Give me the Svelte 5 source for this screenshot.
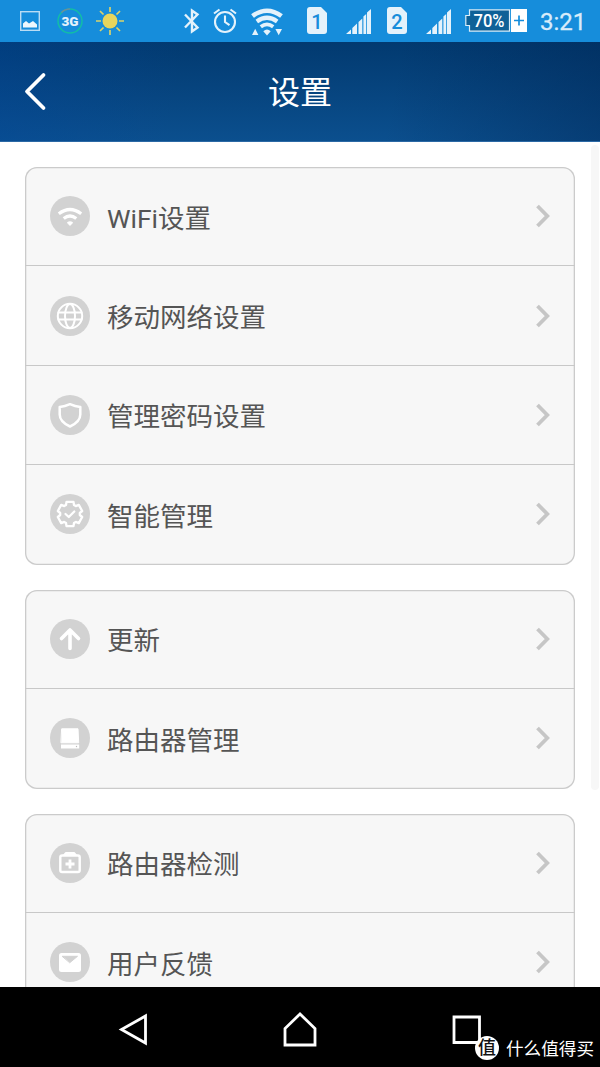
<script>
const groups = [
  [
    { icon: 'wifi', label: 'WiFi设置' },
    { icon: 'globe', label: '移动网络设置' },
    { icon: 'shield', label: '管理密码设置' },
    { icon: 'gear', label: '智能管理' }
  ],
  [
    { icon: 'update', label: '更新' },
    { icon: 'router', label: '路由器管理' }
  ],
  [
    { icon: 'check', label: '路由器检测' },
    { icon: 'mail', label: '用户反馈' }
  ]
]
</script>

{#snippet sim(n)}
  <svg class="sim" width="20" height="42" viewBox="0 0 20 42">
    <path d="M3 7h11l6 6v18a3 3 0 0 1-3 3H3a3 3 0 0 1-3-3V10a3 3 0 0 1 3-3z" fill="#e4f2fb" />
    <text x="10" y="28.5" text-anchor="middle" font-size="20" font-weight="500" fill="#168ddb">{n}</text>
  </svg>
{/snippet}

{#snippet signal()}
  <svg class="signal" width="25" height="42" viewBox="0 0 25 42" fill="#e4f2fb">
    <path d="M0 34L5 29.5V34zM6.3 34V28L11 23.5V34zM12.5 34V22L16.3 18.5V34zM17.4 34V16.5L20.2 14V34zM21 34V12.5L25 9V34z" />
  </svg>
{/snippet}

<div class="screen">
  <div class="status">
    <svg class="picture" width="20" height="42" viewBox="0 0 20 42">
      <rect x=".7" y="11.7" width="18.6" height="18.6" fill="none" stroke="#b9dcf4" stroke-width="1.4" />
      <path d="M3 27.5V23.5l3-2.5 3 2.5 4-2.500 4 3.500v3z" fill="#eef7fd" />
    </svg>
    <svg class="net" width="26" height="42" viewBox="0 0 26 42">
      <circle cx="13" cy="21" r="12" fill="none" stroke="#12bda7" stroke-width="1.5" />
      <path d="M4.5 12.5A12 12 0 0 1 13 9" fill="none" stroke="#6b8d9c" stroke-width="1.6" />
      <text x="13" y="25.7" text-anchor="middle" font-size="12" font-weight="900" textLength="17" lengthAdjust="spacingAndGlyphs" fill="#e4f2fb">3G</text>
    </svg>
    <svg class="sun" width="28" height="42" viewBox="0 0 28 42">
      <circle cx="14" cy="21" r="7.5" fill="#e7d55c" />
      <path d="M14 7v5M14 30v5M0 21h5M23 21h5M4 11l3.5 3.5M20.5 27.5L24 31M4 31l3.5-3.5M20.5 14.5L24 11" stroke="#d9d36c" stroke-width="1.7" />
    </svg>
    <svg class="bluetooth" width="16" height="42" viewBox="0 0 16 42">
      <path d="M1 14.5l12.5 13-5.500 4v-21l5.500 4L1 27.500" fill="none" stroke="#e4f2fb" stroke-width="2.4" />
    </svg>
    <svg class="alarm" width="24" height="42" viewBox="0 0 24 42" fill="none" stroke="#e4f2fb" stroke-width="2.1">
      <circle cx="12" cy="22" r="10" />
      <path d="M12 15.5V22l4.5 3.2M1 13.5l5.5-4M23 13.5l-5.5-4" />
    </svg>
    <svg class="wifi" width="32" height="42" viewBox="0 0 32 42">
      <g fill="none" stroke="#e4f2fb">
        <path d="M1.5 16Q16 5.5 30.5 16" stroke-width="4.6" />
        <path d="M5.8 21.5Q16 14 26.2 21.5" stroke-width="4.2" />
        <path d="M9.8 26.7Q16 22 22.2 26.7" stroke-width="3.8" />
      </g>
      <path d="M12.3 31.2q3.7-3.200 7.400 0L16 35.500zM1 35l3.200-6.300L7.400 35zM24.400 29h6.600l-3.300 6.300z" fill="#e4f2fb" />
    </svg>
    {@render sim(1)}
    {@render signal()}
    {@render sim(2)}
    {@render signal()}
    <svg class="battery" width="62" height="42" viewBox="0 0 62 42">
      <path d="M4.5 9.8h40v21.4h-40v-5.700H.8v-10h3.700z" fill="#0f6197" stroke="#d9edf9" stroke-width="1.2" />
      <rect x="46" y="9" width="16" height="23" fill="#fff" />
      <path d="M54 15.5v10M49 20.5h10" stroke="#168ddb" stroke-width="1.7" />
      <text x="24" y="26.8" text-anchor="middle" font-size="17.5" font-weight="500" textLength="31" lengthAdjust="spacingAndGlyphs" fill="#fff">70%</text>
    </svg>
    <span class="time">3:21</span>
  </div>

  <header>
    <svg class="back" width="24" height="40" viewBox="0 0 24 40">
      <path d="M19.5 4L3 20.500 19.5 37" fill="none" stroke="#fff" stroke-width="3.8" stroke-linecap="round" stroke-linejoin="round" />
    </svg>
    <h1>设置</h1>
  </header>

  <main>
    {#each groups as rows}
      <section>
        {#each rows as row}
          <div class="row">
            <svg class="icon" width="40" height="40" viewBox="0 0 40 40" fill="none" stroke="#fff" stroke-linecap="round" stroke-linejoin="round">
              <circle cx="20" cy="20" r="20" fill="#d2d2d2" stroke="none" />
              {#if row.icon === 'wifi'}
                <path d="M8.8 17.7q11.200-8.500 22.400 0M13.700 22.500q6.300-5 12.600 0" stroke-width="3.3" stroke-linecap="butt" />
                <path d="M17.800 26.700q2.200-1.500 4.400 0L20 29z" fill="#fff" stroke-width="1.4" />
              {:else if row.icon === 'globe'}
                <circle cx="20" cy="20" r="12.2" stroke-width="2" />
                <ellipse cx="20" cy="20" rx="5" ry="12" stroke-width="2" />
                <path d="M8.500 16.500h23M8.500 23.500h23" stroke-width="2" />
              {:else if row.icon === 'shield'}
                <path d="M20 9.200q5 2.300 10.300 2.800v7.500q0 7.300-10.300 12Q9.700 26.800 9.700 19.500V12Q15 11.500 20 9.200z" stroke-width="2.5" />
              {:else if row.icon === 'gear'}
                <path d="M16.500 7.900h7l.5 3.100 1.800 1.100 3-1.200 3.400 6.100-2.400 2v2l2.400 2-3.400 6.100-3-1.200L24 29l-.5 3.100h-7L16 29l-1.800-1.100-3 1.200L7.800 23l2.400-2v-2l-2.400-2 3.400-6.100 3 1.200L16 11z" stroke-width="2.3" />
                <path d="M15.500 20l3.300 3 5.500-5.500" stroke-width="2.3" />
              {:else if row.icon === 'update'}
                <path d="M20 29.500V11.500M11.500 19.500L20 11l8.500 8.500" stroke-width="3.6" />
              {:else if row.icon === 'router'}
                <path d="M12 10.800h16l.7 14H11.300z" fill="#fff" stroke-width="1" />
                <path d="M11 26.500h18.200v4H11z" fill="#fff" stroke="none" />
                <circle cx="26.500" cy="28.500" r=".7" fill="#bbb" stroke="none" />
              {:else if row.icon === 'check'}
                <path d="M14 12l1.700-2h8.600l1.700 2z" fill="#fff" stroke-width="1.8" />
                <rect x="10.300" y="12.500" width="19.400" height="16.500" rx="1.800" stroke-width="2.400" />
                <path d="M20 16.500v9M15.500 21h9" stroke-width="2.800" stroke-linecap="butt" />
              {:else if row.icon === 'mail'}
                <rect x="9" y="11" width="22" height="19" rx="2.5" fill="#fff" stroke="none" />
                <path d="M12.500 14.300h15L20 20.500z" fill="#d2d2d2" stroke="#d2d2d2" stroke-width="1" />
              {/if}
            </svg>
            <span class="label">{row.label}</span>
            <svg class="arrow" width="16" height="26" viewBox="0 0 16 26">
              <path d="M2.500 3l9.800 10-9.800 10" fill="none" stroke="#c6c6c6" stroke-width="3.8" />
            </svg>
          </div>
        {/each}
      </section>
    {/each}
    <i class="scrollbar"></i>
  </main>

  <nav>
    <svg width="32" height="34" viewBox="0 0 32 34"><path d="M29.500 3v27l-24-13.500z" /></svg>
    <svg width="36" height="36" viewBox="0 0 36 36"><path d="M18 2L3 16.500V33h30V16.500z" /></svg>
    <svg width="32" height="32" viewBox="0 0 32 32"><path d="M3 3h25.500v25.500H3z" /></svg>
    <div class="mark">
      <b>值</b>
      <span>什么值得买</span>
    </div>
  </nav>
</div>

<style>
  :global(body){
    margin: 0;
    background: #fff;
  }

  .screen{
    display: flex;
    flex-direction: column;
    width: 600px;
    height: 1067px;
    overflow: hidden;
    font-family: Roboto, "Noto Sans CJK SC", sans-serif;
  }

  svg{
    display: block;
    flex: none;
  }

  .status{
    display: flex;
    flex: none;
    height: 42px;
    padding-left: 20px;
    background: #168ddb;
  }
  .net{ margin-left: 17px; }
  .sun{ margin-left: 13px; }
  .bluetooth{ margin-left: 60px; }
  .alarm{ margin-left: 13px; }
  .wifi{ margin-left: 14px; }
  .sim{ margin-left: 24px; }
  .signal{ margin-left: 19px; }
  .signal + .sim{ margin-left: 16px; }
  .battery{ margin-left: 14px; }
  .time{
    margin-left: 13px;
    font-size: 24px;
    line-height: 44px;
    color: #d8ecfa;
    -webkit-text-stroke: .3px #d8ecfa;
  }

  header{
    display: flex;
    flex: none;
    align-items: center;
    box-sizing: border-box;
    height: 99.5px;
    padding: 0 24px;
    border-bottom: 1px solid #2b69a5;
    background:
      linear-gradient(100deg, rgba(0, 70, 160, .3), transparent 30%, transparent 65%, rgba(0, 35, 80, .4)),
      linear-gradient(#023a70, #0b4f8e);
  }

  h1{
    flex: 1;
    margin: 0 24px 0 0;
    padding-top: 3px;
    font-size: 32px;
    font-weight: 400;
    line-height: 40px;
    text-align: center;
    color: #fff;
  }

  main{
    position: relative;
    flex: 1;
    min-height: 0;
    padding: 25.5px 25px 0;
    overflow: hidden;
  }

  section{
    margin-bottom: 25.2px;
    border-radius: 12px;
    background: #f7f7f7;
    box-shadow: inset 0 0 0 1.3px #cbcbcb;
  }

  .row{
    display: flex;
    align-items: center;
    box-sizing: border-box;
    height: 99.4px;
    padding: 0 24px 0 25px;
    border-bottom: 1px solid #c8c8c8;
  }
  .row:last-child{
    border-color: transparent;
  }

  .label{
    flex: 1;
    margin-left: 17px;
    padding-top: 5px;
    font-size: 26.5px;
    line-height: 40px;
    color: #555;
  }

  .scrollbar{
    position: absolute;
    top: 3px;
    right: 1px;
    width: 8px;
    height: 645px;
    border-radius: 4px;
    background: #f7f7f7;
  }

  nav{
    position: relative;
    display: flex;
    flex: none;
    align-items: center;
    justify-content: space-between;
    box-sizing: border-box;
    height: 80px;
    padding: 5px 117px 0 116px;
    background: #000;
  }
  nav path{
    fill: none;
    stroke: #fff;
    stroke-width: 2.8;
  }

  /* sits over the corner of the recents button */
  .mark{
    position: absolute;
    right: 6px;
    bottom: 5px;
    display: flex;
    align-items: center;
    gap: 7px;
    font-size: 17.6px;
    line-height: 25px;
    color: #fff;
  }
  .mark span{
    padding-top: 3px;
  }
  .mark b{
    width: 24px;
    height: 24px;
    border-radius: 50%;
    background: #fff;
    color: #111;
    font-size: 18px;
    font-weight: 500;
    line-height: 24px;
    text-align: center;
  }
</style>
